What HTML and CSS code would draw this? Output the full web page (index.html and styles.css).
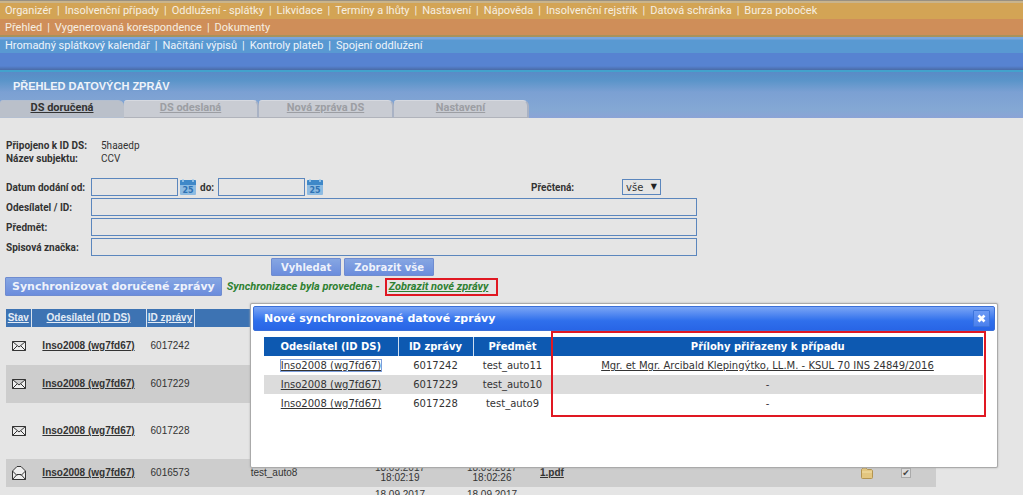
FILE: index.html
```html
<!DOCTYPE html>
<html lang="cs">
<head>
<meta charset="utf-8">
<title>Přehled datových zpráv</title>
<link rel="stylesheet" href="styles.css">
</head>
<body>
<header>
  <nav class="menu menu-main"><a href="#">Organizér</a><a href="#">Insolvenční případy</a><a href="#">Oddlužení - splátky</a><a href="#">Likvidace</a><a href="#">Termíny a lhůty</a><a href="#">Nastavení</a><a href="#">Nápověda</a><a href="#">Insolvenční rejstřík</a><a href="#">Datová schránka</a><a href="#">Burza poboček</a></nav>
  <nav class="menu menu-sub"><a href="#">Přehled</a><a href="#">Vygenerovaná korespondence</a><a href="#">Dokumenty</a></nav>
  <nav class="menu menu-blue"><a href="#">Hromadný splátkový kalendář</a><a href="#">Načítání výpisů</a><a href="#">Kontroly plateb</a><a href="#">Spojení oddlužení</a></nav>
  <div class="strip"></div>
  <div class="titlebar">
    <h1>PŘEHLED DATOVÝCH ZPRÁV</h1>
    <nav class="tabs"><a class="tab tab-active" href="#">DS doručená</a><a class="tab" href="#">DS odeslaná</a><a class="tab" href="#">Nová zpráva DS</a><a class="tab" href="#">Nastavení</a></nav>
  </div>
</header>
<main>
  <dl class="info">
    <dt>Připojeno k ID DS:</dt><dd>5haaedp</dd>
    <dt>Název subjektu:</dt><dd>CCV</dd>
  </dl>
  <form class="filter">
    <label for="from">Datum dodání od:</label>
    <div class="dates">
      <input id="from" class="date" type="text">
      <svg class="cal" viewBox="0 0 16 16"><rect y="1" width="16" height="15" rx="1" fill="#8dbbe2"/><path d="M0 2q0-1 1-1h14q1 0 1 1v4H0z" fill="#3f88c8"/><path d="M3 0v3M13 0v3" stroke="#a8cdec" stroke-width="1.5"/><text class="cal-day" x="8" y="14" text-anchor="middle">25</text></svg>
      <label class="to" for="to">do:</label>
      <input id="to" class="date" type="text">
      <svg class="cal" viewBox="0 0 16 16"><rect y="1" width="16" height="15" rx="1" fill="#8dbbe2"/><path d="M0 2q0-1 1-1h14q1 0 1 1v4H0z" fill="#3f88c8"/><path d="M3 0v3M13 0v3" stroke="#a8cdec" stroke-width="1.5"/><text class="cal-day" x="8" y="14" text-anchor="middle">25</text></svg>
      <div class="read"><label for="read">Přečtená:</label>
      <span class="select"><select id="read"><option>vše</option></select></span></div>
    </div>
    <label for="sender">Odesílatel / ID:</label><input id="sender" type="text">
    <label for="subject">Předmět:</label><input id="subject" type="text">
    <label for="mark">Spisová značka:</label><input id="mark" type="text">
    <div class="actions"><button type="button">Vyhledat</button><button type="button">Zobrazit vše</button></div>
  </form>
  <div class="sync">
    <button class="sync-button" type="button">Synchronizovat doručené zprávy</button>
    <span class="status">Synchronizace byla provedena -</span><a class="status show-new" href="#">Zobrazit nové zprávy</a>
  </div>
  <table class="messages">
    <colgroup><col class="c-state"><col class="c-sender"><col class="c-id"><col class="c-subject"><col class="c-date"><col class="c-date"><col><col class="c-folder"><col class="c-check"></colgroup>
    <thead><tr><th><a href="#">Stav</a></th><th><a href="#">Odesílatel (ID DS)</a></th><th><a href="#">ID zprávy</a></th><th></th><th></th><th></th><th></th><th></th><th></th></tr></thead>
    <tbody>
      <tr class="row-a"><td><svg class="mail" viewBox="0 0 14 14"><path d="M.5 2.5h13v9H.5zM.5 2.5L7 8l6.500-5.500M.5 11.500L5 7M13.500 11.500L9 7"/></svg></td><td><a href="#">Inso2008 (wg7fd67)</a></td><td>6017242</td><td></td><td></td><td></td><td></td><td></td><td></td></tr>
      <tr class="row-a"><td><svg class="mail" viewBox="0 0 14 14"><path d="M.5 2.5h13v9H.5zM.5 2.5L7 8l6.500-5.500M.5 11.500L5 7M13.500 11.500L9 7"/></svg></td><td><a href="#">Inso2008 (wg7fd67)</a></td><td>6017229</td><td></td><td></td><td></td><td></td><td></td><td></td></tr>
      <tr class="row-b"><td><svg class="mail" viewBox="0 0 14 14"><path d="M.5 2.5h13v9H.5zM.5 2.5L7 8l6.500-5.500M.5 11.500L5 7M13.500 11.500L9 7"/></svg></td><td><a href="#">Inso2008 (wg7fd67)</a></td><td>6017228</td><td></td><td></td><td></td><td></td><td></td><td></td></tr>
      <tr class="row-c"><td><svg class="mail" viewBox="0 0 14 14"><path d="M.5 5L5 .5h4L13.500 5v8.500H.5zM.5 5L5 9.500M13.500 5L9 9.500M.5 13.500L5 8.500h4l4.500 5"/></svg></td><td><a href="#">Inso2008 (wg7fd67)</a></td><td>6016573</td><td>test_auto8</td><td class="when">18.09.2017<br>18:02:19</td><td class="when">18.09.2017<br>18:02:26</td><td class="file"><a href="#">1.pdf</a></td><td><svg class="folder" viewBox="0 0 12 12"><path d="M.5 10.500V2.500L2 1h3l1.500 1.500h4l1 1v7q0 1-1 1h-9q-1 0-1-1z" fill="#e3c67f" stroke="#b39450"/><path d="M1 5h10" stroke="#f3dfa7"/></svg></td><td><input class="check" type="checkbox" aria-label="Přečtená" checked></td></tr>
      <tr class="row-c"><td></td><td></td><td></td><td></td><td class="when">18.09.2017</td><td class="when">18.09.2017</td><td></td><td></td><td></td></tr>
    </tbody>
  </table>
</main>
<section class="dialog" role="dialog" aria-labelledby="dialog-title">
  <div class="dialog-head"><h2 id="dialog-title">Nové synchronizované datové zprávy</h2><button class="close" type="button" aria-label="Zavřít"><svg viewBox="0 0 9 9"><path d="M1.500 1.500l6 6M7.500 1.500l-6 6" stroke="#fff" stroke-width="2.600"/></svg></button></div>
  <div class="dialog-body">
    <table class="new">
      <colgroup><col class="n-sender"><col class="n-id"><col class="n-subject"><col></colgroup>
      <thead><tr><th>Odesílatel (ID DS)</th><th>ID zprávy</th><th>Předmět</th><th>Přílohy přiřazeny k případu</th></tr></thead>
      <tbody>
        <tr><td><a class="focused" href="#">Inso2008 (wg7fd67)</a></td><td>6017242</td><td>test_auto11</td><td><a href="#">Mgr. et Mgr. Arcibald Klepingýtko, LL.M. - KSUL 70 INS 24849/2016</a></td></tr>
        <tr><td><a href="#">Inso2008 (wg7fd67)</a></td><td>6017229</td><td>test_auto10</td><td>-</td></tr>
        <tr><td><a href="#">Inso2008 (wg7fd67)</a></td><td>6017228</td><td>test_auto9</td><td>-</td></tr>
      </tbody>
    </table>
    <div class="marker"></div>
  </div>
</section>
</body>
</html>
```
FILE: styles.css
```css
* { box-sizing: border-box; }
body {
  margin: 0;
  height: 100vh;
  overflow: hidden;
  position: relative;
  background: #e5e5e5;
  color: #333;
  font: 10px/13px Roboto, "Liberation Sans", Arial, sans-serif;
}
h1, h2, dl, dd { margin: 0; }
a { color: inherit; }

.menu { display: flex; padding-left: 5px; color: #f6efe2; font-size: 11px; white-space: nowrap; }
.menu a { text-decoration: none; }
.menu a + a::before { content: "|"; margin: 0 5px; }
.menu-main { height: 19px; border-top: 1px solid #999080; background: linear-gradient(#c9b48c 2px, #d3a455 2px); line-height: 19px; }
.menu-sub { height: 18px; border-bottom: 2px solid #a8925c; background: #cf8e59; line-height: 17px; }
.menu-blue { height: 16px; background: linear-gradient(#7ba5dc 2px, #5999d2 3px); line-height: 17px; color: #eef4fb; }
.strip { height: 19px; border-bottom: 2px solid #43a2cc; background: linear-gradient(#5783d1 13px, #4a6ba6 17px); }

.titlebar {
  height: 46px;
  display: flex;
  flex-direction: column;
  justify-content: space-between;
  background: linear-gradient(#5a8bc6, #5994c9 8px, #7ba0d3 20px, #84a8d4 38px, #8ba3d6);
}
h1 { padding: 7px 0 0 13px; font: bold 11px/15px "Liberation Sans", Arial, sans-serif; color: #eef3fa; }
.tabs { display: flex; font-size: 11px; }
.tab {
  width: 135px;
  height: 18px;
  border: 1px solid #d6d9e0;
  border-width: 1px 2px 1px 0;
  border-right-color: #a9b2c4;
  border-bottom-color: #b0b3bb;
  border-radius: 3px 6px 0 0;
  background: #c9ccd3;
  color: #9c9ea3;
  font-weight: bold;
  line-height: 13px;
  text-align: center;
}
.tab-active { width: 124px; border-color: #b4bfd0; border-right-width: 0; background: #bac0ca; color: #333; }

main { padding-top: 21px; }
.info { display: grid; grid-template-columns: 95px 1fr; padding-left: 6px; }
.info dt { white-space: nowrap; }
.info dt, .filter label { font-weight: bold; }
.filter {
  display: grid;
  grid-template-columns: 85px minmax(0, 606px);
  row-gap: 2px;
  align-items: center;
  padding: 13px 0 0 6px;
  white-space: nowrap;
}
.filter input { width: 100%; height: 18px; border: 1px solid #5b86bd; background: transparent; }
.dates { display: flex; align-items: center; }
.dates .date { width: 87px; }
.cal { width: 16px; height: 16px; margin-left: 2px; }
.cal-day { font: bold 8px "DejaVu Sans", sans-serif; fill: #2f72b4; }
.dates .to { width: 18px; margin-left: 4px; }
.read { display: flex; align-items: center; justify-content: space-between; width: 130px; margin-left: auto; margin-right: 36px; }
.select { position: relative; }
.select::after { content: "▼"; position: absolute; right: 4px; top: 1px; font: 8px/14px "DejaVu Sans", sans-serif; color: #222; pointer-events: none; }
select {
  display: block;
  width: 39px;
  height: 16px;
  padding: 0 0 0 3px;
  border: 1px solid #5b86bd;
  background: transparent;
  color: #333;
  font: 10px "DejaVu Sans", Verdana, sans-serif;
  appearance: none;
}
.actions { grid-column: 1 / -1; display: flex; gap: 3px; padding-left: 265px; }
button {
  height: 18px;
  padding: 0 9px;
  border: 1px solid #6f8cd0;
  border-radius: 1px;
  background: linear-gradient(#86a6e2, #6b8ddd);
  color: #eef2fb;
  font: bold 10px "DejaVu Sans", Verdana, sans-serif;
  white-space: nowrap;
}
.sync { display: flex; align-items: center; padding: 1px 0 0 5px; }
.sync-button { height: 19px; padding: 0 6px; font-size: 11px; }
.status { color: #2f8132; font-size: 11px; font-style: italic; font-weight: bold; margin-left: 5px; white-space: nowrap; }
.show-new { padding: 0 8px 0 2px; border: 2px solid #e01822; line-height: 14px; }

table { border-collapse: collapse; table-layout: fixed; text-align: center; }
th, td { padding: 0; }
.messages { width: calc(100% - 93px); margin: 13px 0 0 6px; font-family: "Liberation Sans", Arial, sans-serif; line-height: 10px; }
.messages th { height: 18px; background: #3d73b3; border-right: 1px solid #dbe4ee; color: #e4ecf6; white-space: nowrap; }
.messages th:nth-child(n+4) { border-right: 0; }
.messages tr:nth-child(even) { background: #cdcdcd; }
.messages td:nth-child(2), .messages .file { font-weight: bold; }
.messages .when { padding-top: 4px; vertical-align: top; }
.row-c + .row-c .when { padding-top: 3px; }
.c-state { width: 25px; }
.c-sender { width: 115px; }
.c-id { width: 48px; }
.c-subject { width: 160px; }
.c-date { width: 92px; }
.c-folder { width: 18px; }
.c-check { width: 60px; }
.row-a { height: 38px; }
.row-b { height: 56px; }
.row-c { height: 28px; }
.messages .file { text-align: left; padding-left: 2px; }
.mail { display: block; width: 14px; height: 14px; margin: 0 auto; fill: #efefef; stroke: #333; }
.folder { width: 12px; height: 12px; display: block; margin: 0 auto; }
.check {
  display: grid;
  place-items: center;
  width: 10px;
  height: 10px;
  margin: 0 auto;
  border: 1px solid #aaa;
  background: #ddd;
  color: #444;
  appearance: none;
}
.check:checked::before { content: "✔"; font: 9px/9px "DejaVu Sans", sans-serif; }

.dialog {
  position: absolute;
  top: 303px;
  left: 250px;
  right: 25px;
  min-height: 165px;
  padding: 2px;
  border: 1px solid #aaa;
  border-radius: 2px;
  background: #fff;
  box-shadow: 0 0 2px #aaa;
  font: 10px/13px "DejaVu Sans", Verdana, sans-serif;
}
.dialog-head {
  display: flex;
  align-items: center;
  justify-content: space-between;
  height: 25px;
  padding: 0 4px 0 10px;
  border: 1px solid #3a6fd8;
  border-radius: 2px;
  background: linear-gradient(#7ba5f5, #2f6fec 60%, #2865e6);
}
h2 { font-size: 11px; color: #fff; }
.close { width: 17px; height: 17px; padding: 3px; border-color: #3d74db; background: linear-gradient(#6c9af4, #4a80ee); }
.close svg { display: block; width: 9px; height: 9px; }
.dialog-body { position: relative; padding: 6px 12px 0 11px; }
.new { width: 100%; }
.new tr { height: 19px; }
.new th { background: #0d59b1; color: #fff; border-right: 1px solid #cfdef0; }
.new th:last-child { border-right: 0; }
.new tbody tr:nth-child(even) { background: #dcdcdc; }
.n-sender { width: 134px; }
.n-id { width: 75px; }
.n-subject { width: 79px; }
.focused { outline: 1px solid #7d9edb; }
.marker { position: absolute; top: 0; left: 298px; right: 9px; height: 86px; border: 2px solid #e01822; }
```
